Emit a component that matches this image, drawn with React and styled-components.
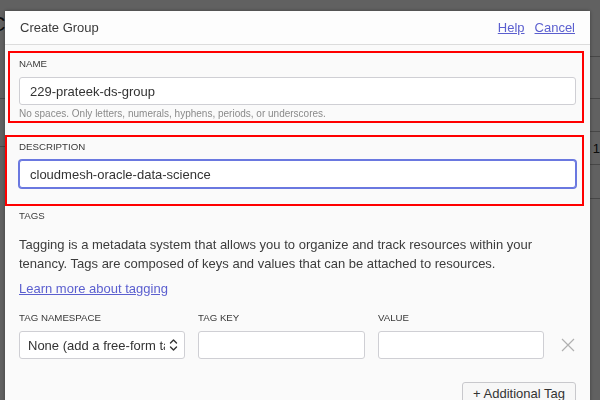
import React from "react";
import styled, { createGlobalStyle } from "styled-components";

const Global = createGlobalStyle`
  html, body { margin: 0; padding: 0; background: #fff; overflow: hidden; }
  body { font-family: "Liberation Sans", Arial, sans-serif; }
  * { box-sizing: border-box; }
`;

const Page = styled.div`
  width: 600px;
  height: 400px;
  display: grid;
  grid-template-columns: 300px 300px;
  color: #222;
`;

const PageCol = styled.div`
  display: flex;
  flex-direction: column;
`;

const PageTitle = styled.div`
  font-size: 20px;
  height: 45px;
  padding-top: 13px;
  margin-left: ${(p) => p.$shift || 0}px;
`;

const PageRow = styled.div`
  height: ${(p) => p.$h}px;
  border-bottom: 1px solid #bbb;
  display: flex;
  align-items: center;
  justify-content: flex-end;
  font-size: 13px;
`;

const Overlay = styled.div`
  position: fixed;
  inset: 0;
  background: rgba(0, 0, 0, 0.62);
`;

const Modal = styled.div`
  position: absolute;
  left: 5px;
  top: 11px;
  width: 585px;
  height: 420px;
  background: #fafafa;
  box-shadow: 0 0 4px rgba(0, 0, 0, 0.35);
  display: flex;
  flex-direction: column;
`;

const Header = styled.div`
  height: 34px;
  flex: none;
  display: flex;
  align-items: center;
  justify-content: space-between;
  padding: 0 15px;
  background: #fdfdfd;
  border-bottom: 1px solid #dcdcdc;
`;

const Title = styled.div`
  font-size: 13px;
  color: #3a3a3a;
`;

const Links = styled.div`
  display: flex;
  gap: 10px;
`;

const Link = styled.a`
  font-size: 13px;
  color: #5b5fcf;
  text-decoration: underline;
  cursor: pointer;
`;

const Body = styled.div`
  display: flex;
  flex-direction: column;
  padding: 0 14px;
`;

const Highlight = styled.div`
  border: 2px solid #f00;
  margin: ${(p) => p.$mt}px -8px 0 ${(p) => p.$ml}px;
  padding: ${(p) => p.$pt}px 6px ${(p) => p.$pb}px ${(p) => p.$pl}px;
  display: flex;
  flex-direction: column;
`;

const Label = styled.div`
  font-size: 9.7px;
  line-height: 12px;
  color: #383838;
  text-transform: uppercase;
  margin-bottom: ${(p) => p.$mb ?? 7}px;
`;

const Input = styled.div`
  height: 28px;
  background: #fff;
  border: 1px solid ${(p) => (p.$focus ? "#6a78e0" : "#cfcfd4")};
  box-shadow: ${(p) => (p.$focus ? "0 0 0 1px #6a78e0" : "none")};
  border-radius: 3px;
  padding: 0 10px;
  display: flex;
  align-items: center;
  font-size: 13px;
  color: #333;
  white-space: nowrap;
  overflow: hidden;
`;

const Help = styled.div`
  font-size: 10px;
  line-height: 12px;
  color: #8a8a8a;
  margin-top: 3px;
`;

const SectionLabel = styled(Label)`
  margin-top: 4px;
  margin-bottom: 13px;
`;

const Paragraph = styled.p`
  margin: 0;
  font-size: 13px;
  line-height: 19px;
  color: #3c3c3c;
`;

const LearnLink = styled(Link)`
  display: block;
  line-height: 19px;
  margin-top: 6px;
  margin-bottom: 14px;
`;

const TagGrid = styled.div`
  display: grid;
  grid-template-columns: 166px 167px 166px 1fr;
  column-gap: 13px;
  align-items: end;
`;

const TagField = styled.div`
  display: flex;
  flex-direction: column;
`;

const SelectBox = styled(Input)`
  padding: 0 6px 0 8px;
  justify-content: space-between;
  gap: 4px;
`;

const SelectText = styled.span`
  overflow: hidden;
  white-space: nowrap;
  flex: 1;
`;

const RemoveBtn = styled.div`
  height: 28px;
  display: flex;
  align-items: center;
  justify-content: center;
  padding-left: 2px;
`;

const Footer = styled.div`
  display: flex;
  justify-content: flex-end;
  margin-top: 23px;
`;

const Button = styled.button`
  height: 24px;
  padding: 0 10px;
  font-family: inherit;
  font-size: 13px;
  line-height: 22px;
  color: #333;
  background: #f7f7f7;
  border: 1px solid #c8c8cc;
  border-radius: 3px;
  white-space: nowrap;
`;

export default function App() {
  return (
    <>
      <Global />
      <Page>
        <PageCol>
          <PageTitle $shift={-9}>C</PageTitle>
          <PageRow $h={54} />
          <PageRow $h={48} />
        </PageCol>
        <PageCol>
          <PageRow $h={57} />
          <PageRow $h={42} />
          <PageRow $h={33} />
          <PageRow $h={33}>. 1</PageRow>
          <PageRow $h={34} />
        </PageCol>
      </Page>
      <Overlay>
        <Modal>
          <Header>
            <Title>Create Group</Title>
            <Links>
              <Link>Help</Link>
              <Link>Cancel</Link>
            </Links>
          </Header>
          <Body>
            <Highlight $mt={6} $ml={-11} $pt={5} $pb={1} $pl={9}>
              <Label>Name</Label>
              <Input>229-prateek-ds-group</Input>
              <Help>No spaces. Only letters, numerals, hyphens, periods, or underscores.</Help>
            </Highlight>
            <Highlight $mt={12} $ml={-14} $pt={4} $pb={16} $pl={12}>
              <Label>Description</Label>
              <Input $focus>cloudmesh-oracle-data-science</Input>
            </Highlight>
            <SectionLabel>Tags</SectionLabel>
            <Paragraph>
              Tagging is a metadata system that allows you to organize and track resources within your
              tenancy. Tags are composed of keys and values that can be attached to resources.
            </Paragraph>
            <LearnLink>Learn more about tagging</LearnLink>
            <TagGrid>
              <TagField>
                <Label $mb={7}>Tag Namespace</Label>
                <SelectBox>
                  <SelectText>None (add a free-form tag)</SelectText>
                  <svg width="9" height="14" viewBox="0 0 9 14" fill="none" stroke="#333" strokeWidth="1.4" strokeLinecap="round" strokeLinejoin="round">
                    <path d="M1.5 5 L4.5 2 L7.5 5" />
                    <path d="M1.5 9 L4.5 12 L7.5 9" />
                  </svg>
                </SelectBox>
              </TagField>
              <TagField>
                <Label $mb={7}>Tag Key</Label>
                <Input />
              </TagField>
              <TagField>
                <Label $mb={7}>Value</Label>
                <Input />
              </TagField>
              <RemoveBtn>
                <svg width="14" height="14" viewBox="0 0 14 14" stroke="#b0b0b0" strokeWidth="1.2">
                  <path d="M1 1 L13 13 M13 1 L1 13" />
                </svg>
              </RemoveBtn>
            </TagGrid>
            <Footer>
              <Button>+ Additional Tag</Button>
            </Footer>
          </Body>
        </Modal>
      </Overlay>
    </>
  );
}
